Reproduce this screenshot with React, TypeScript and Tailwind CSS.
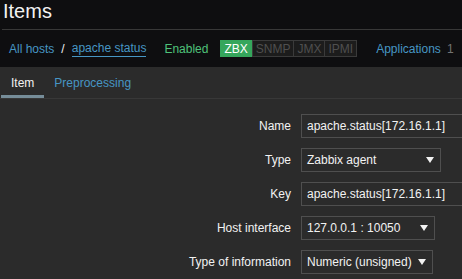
import React from 'react'

function Arrow() {
  return (
    <svg width="8" height="6" viewBox="0 0 8 6" className="shrink-0">
      <path d="M0 0 H8 L4 6 Z" fill="#f2f2f2" />
    </svg>
  )
}

function Select({ value, width }: { value: string; width: string }) {
  return (
    <div className={`flex h-[24px] ${width} items-center justify-between border border-[#4f4f4f] bg-[#2b2b2b] pl-[5px] pr-[6px] text-[#f2f2f2]`}>
      <span>{value}</span>
      <Arrow />
    </div>
  )
}

function TextInput({ value }: { value: string }) {
  return (
    <div className="flex h-[24px] w-[453px] items-center border border-[#4f4f4f] bg-[#2b2b2b] pl-[5px] text-[#f2f2f2]">
      {value}
    </div>
  )
}

export default function App() {
  const rows: { label: string; field: React.ReactNode }[] = [
    { label: 'Name', field: <TextInput value="apache.status[172.16.1.1]" /> },
    { label: 'Type', field: <Select value="Zabbix agent" width="w-[140px]" /> },
    { label: 'Key', field: <TextInput value="apache.status[172.16.1.1]" /> },
    { label: 'Host interface', field: <Select value="127.0.0.1 : 10050" width="w-[134px]" /> },
    { label: 'Type of information', field: <Select value="Numeric (unsigned)" width="w-[132px]" /> },
  ]

  return (
    <div className="h-[279px] w-[462px] overflow-hidden bg-[#0e0e10] font-['Liberation_Sans',Arial,sans-serif] text-[12px] leading-[14px]">
      <div className="h-[29px] pl-[3px]">
        <h1 className="text-[20px] leading-[23px] text-[#f2f2f2]">Items</h1>
      </div>

      <div className="ml-[2px] flex h-[38px] items-center whitespace-nowrap border-t border-[#383838] pl-[7px]">
        <a className="text-[#4796c4]">All hosts</a>
        <span className="mx-[7px] text-[#f2f2f2]">/</span>
        <a className="border-b border-[#4796c4] pb-[1px] text-[#4796c4]">apache status</a>
        <span className="ml-[18px] text-[#4ec27a]">Enabled</span>
        <div className="ml-[12px] flex h-[17px] items-stretch">
          <span className="flex items-center bg-[#35a65c] px-[4px] text-white">ZBX</span>
          <span className="flex items-center border border-[#3a3a3a] bg-[#1c1c1c] px-[3px] text-[#4f4f4f]">SNMP</span>
          <span className="flex items-center border border-l-0 border-[#3a3a3a] bg-[#1c1c1c] px-[3px] text-[#4f4f4f]">JMX</span>
          <span className="flex items-center border border-l-0 border-[#3a3a3a] bg-[#1c1c1c] px-[3px] text-[#4f4f4f]">IPMI</span>
        </div>
        <a className="ml-[19px] text-[#4796c4]">Applications</a>
        <span className="ml-[6px] text-[#737373]">1</span>
      </div>

      <div className="flex h-full">
        <div className="w-[2px] bg-[#1c1c1c]" />
        <div className="flex-1 bg-[#2b2b2b]">
          <div className="flex h-[32px] border-b border-[#383838]">
            <div className="ml-[1px] flex items-center border-b-[3px] border-[#768d99] px-[10px] pt-[4px] text-[#f2f2f2]">Item</div>
            <div className="flex items-center px-[10px] pt-[1px] text-[#4796c4]">Preprocessing</div>
          </div>

          <div className="grid grid-cols-[291px_1fr] items-center gap-x-[10px] gap-y-[10px] pt-[15px]">
            {rows.map((r) => (
              <React.Fragment key={r.label}>
                <div className="whitespace-nowrap text-right text-[#f2f2f2]">{r.label}</div>
                <div>{r.field}</div>
              </React.Fragment>
            ))}
          </div>
        </div>
      </div>
    </div>
  )
}
